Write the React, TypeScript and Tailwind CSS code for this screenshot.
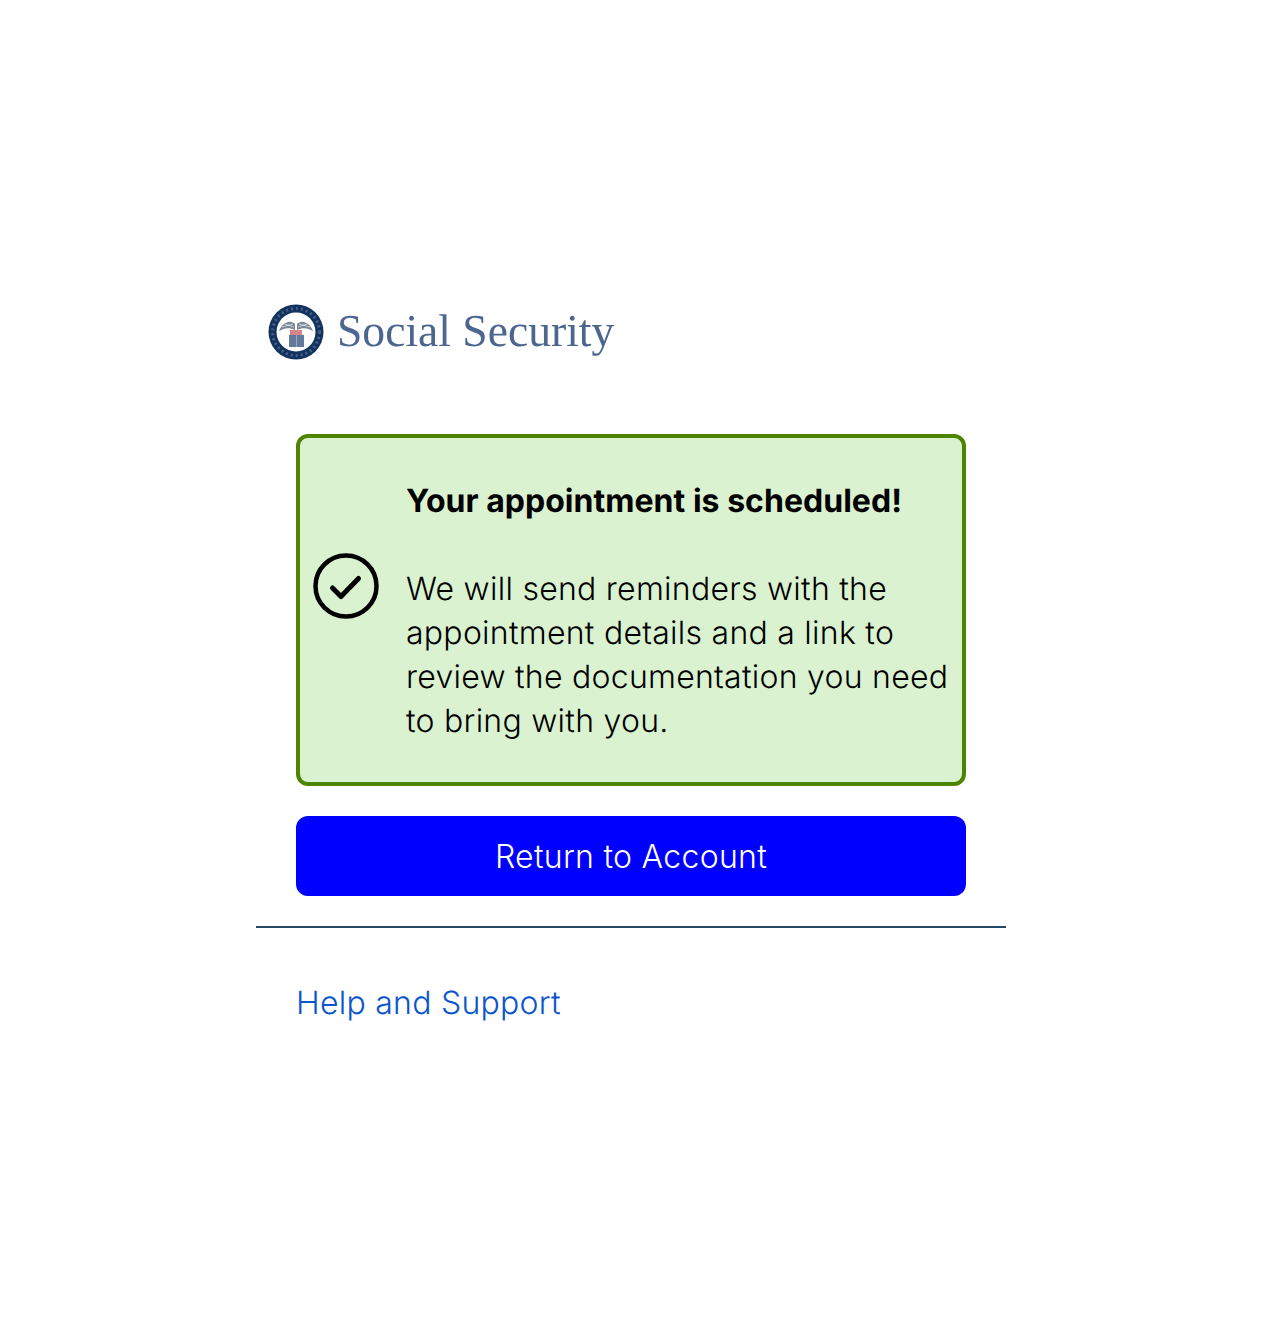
export default function App() {
  return (
    <div className="min-h-[1332px] bg-white pt-[304px] font-[350] tracking-[0.26px] [font-family:Inter,sans-serif] [text-rendering:geometricPrecision]">
      <div className="mx-auto w-[750px]">
        <div className="flex h-[56px] items-center pl-[12px]">
          <svg width="56" height="56" viewBox="0 0 56 56" className="shrink-0 blur-[0.5px]">
            <circle cx="28" cy="28" r="27.5" fill="#12335f" />
            <circle cx="28" cy="28" r="23.5" fill="none" stroke="#46607f" strokeWidth="3" strokeDasharray="2 3" />
            <circle cx="28" cy="28" r="19.5" fill="#ffffff" />
            <path d="M11 27 C14 19 22 15 27 20 L27 26 C21 23 16 24 11 27Z" fill="#7a8798" />
            <path d="M45 27 C42 19 34 15 29 20 L29 26 C35 23 40 24 45 27Z" fill="#7a8798" />
            <path d="M14 23 L25 20 M17 20 L26 23 M42 23 L31 20 M39 20 L30 23" stroke="#ffffff" strokeWidth="0.6" />
            <rect x="22" y="26" width="12" height="5" fill="#d7838c" />
            <rect x="21" y="31" width="15" height="12" fill="#64789a" />
            <path d="M28.5 31 V43" stroke="#a9b6c9" strokeWidth="0.8" />
          </svg>
          <span className="ml-[13px] -translate-y-[1px] text-[45.6px] font-normal leading-none tracking-normal text-[#4c6690] blur-[0.3px] [font-family:'Liberation_Serif',serif]">
            Social Security
          </span>
        </div>
        <div className="mx-[40px] mt-[74px] flex h-[352px] items-start rounded-[12px] border-[4px] border-[#4d8400] bg-[#daf2cf] pl-[13px]">
          <svg width="66" height="66" viewBox="0 0 66 66" className="mt-[115px] shrink-0" fill="none" stroke="#000" strokeWidth="4.5">
            <circle cx="33" cy="33" r="30.5" />
            <path d="M19.5 35 L28 43.5 L45.5 25.5" strokeWidth="5" strokeLinecap="round" strokeLinejoin="round" />
          </svg>
          <div className="mt-[41px] ml-[27px] text-[32px] leading-[44px] text-black">
            <p className="font-bold tracking-[0.03px]">Your appointment is scheduled!</p>
            <p className="mt-[44px]">
              We will send reminders with the appointment details and a link to review the documentation you need to bring with you.
            </p>
          </div>
        </div>
        <button className="mx-[40px] mt-[30px] flex h-[80px] w-[670px] items-center justify-center rounded-[12px] bg-[#0000ff] text-[32px] font-[350] tracking-[0.3px] text-white">
          <span className="translate-y-[1px]">Return to Account</span>
        </button>
        <div className="mt-[30px] h-[2px] bg-[#264a66]" />
        <div className="mt-[53px] pl-[40px]">
          <a className="text-[32px] leading-[44px] text-[#0b55cc]">Help and Support</a>
        </div>
      </div>
    </div>
  );
}
